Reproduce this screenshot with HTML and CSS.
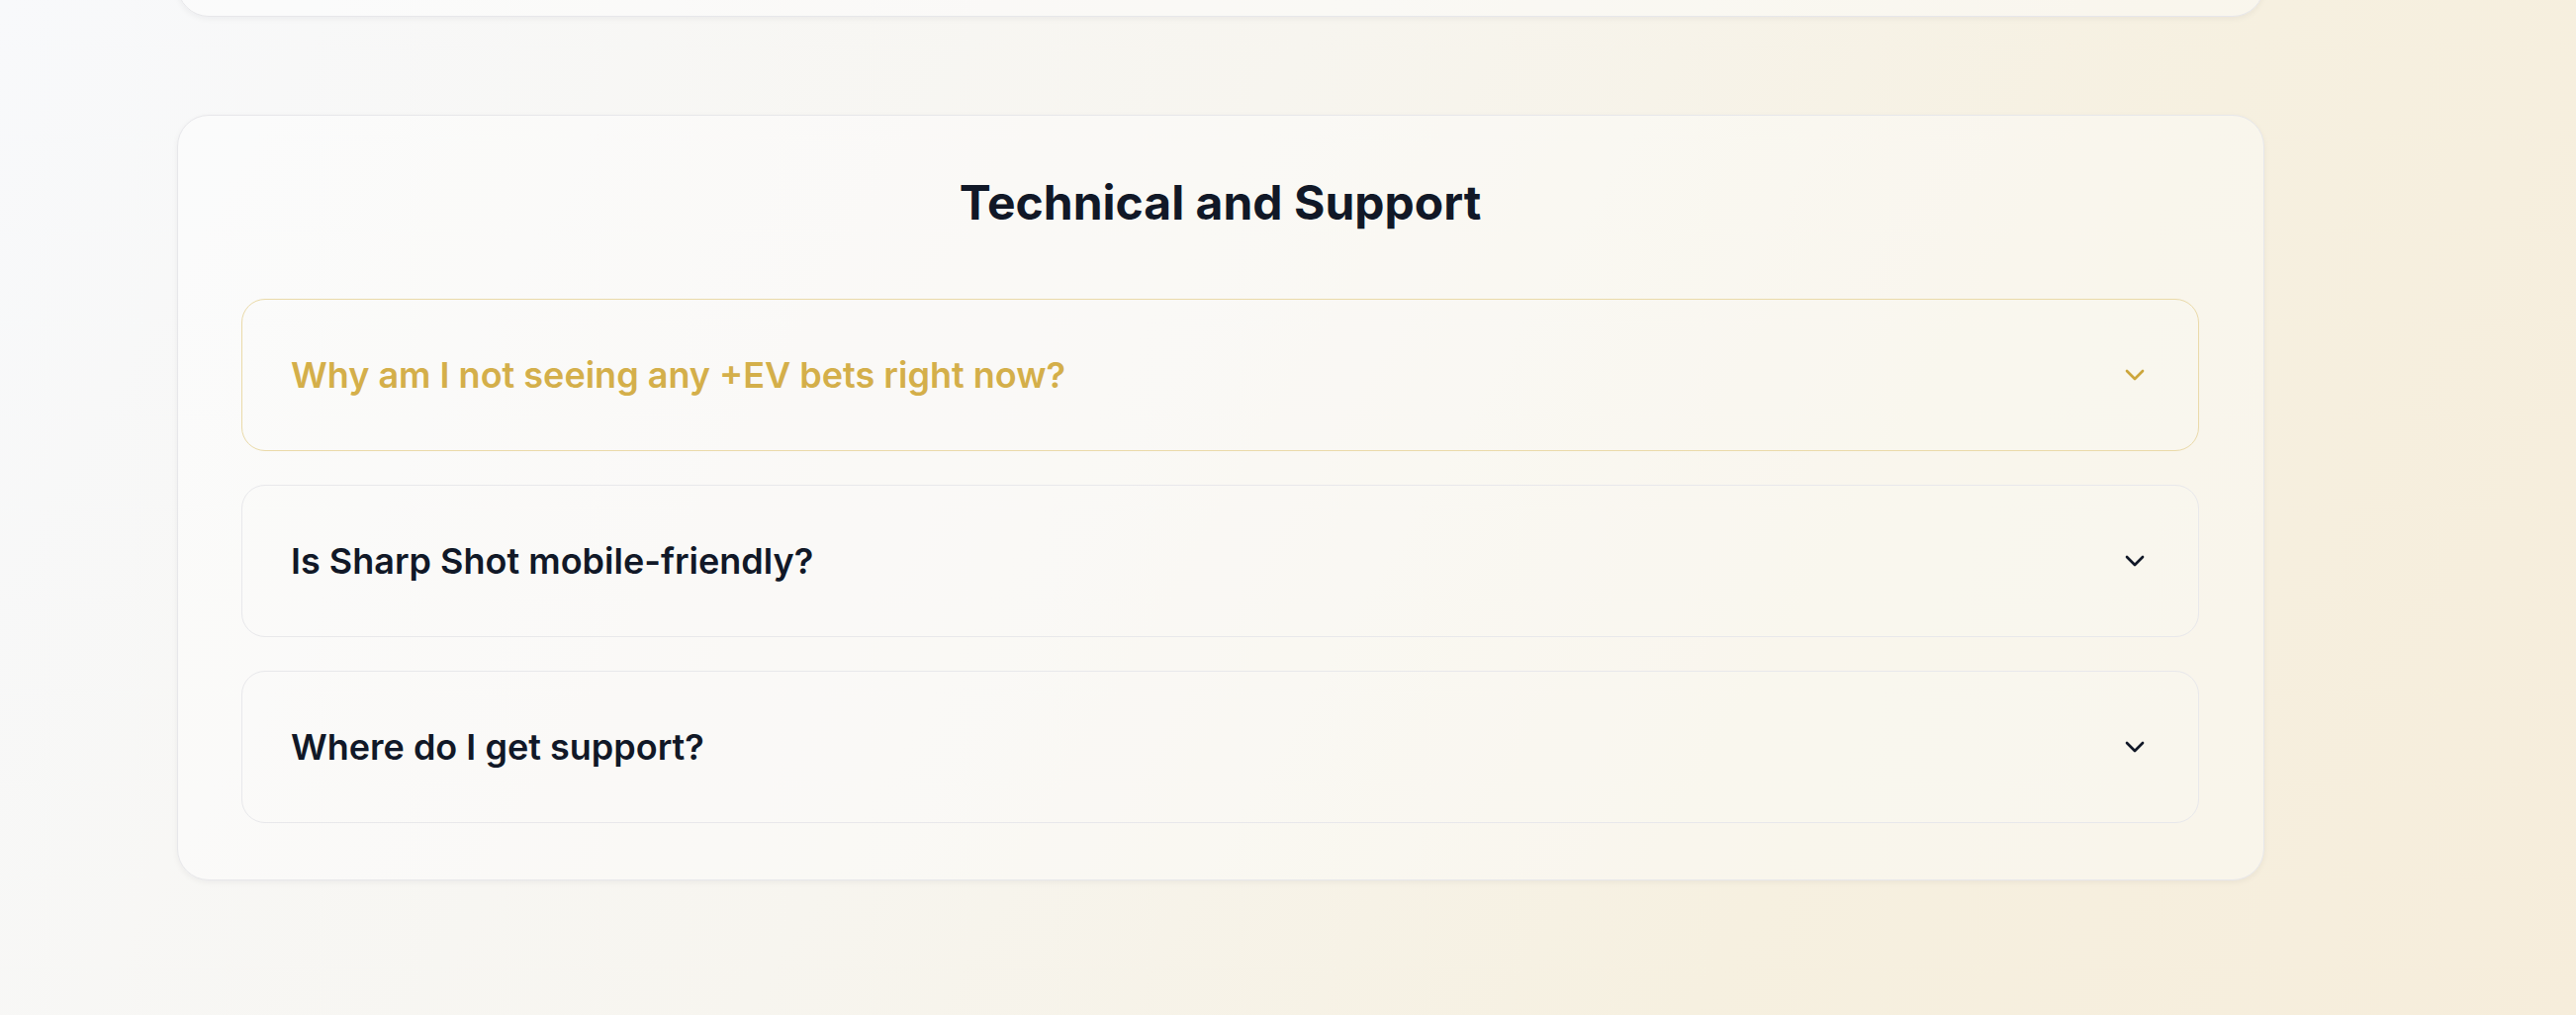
FILE: index.html
```html
<!DOCTYPE html>
<html lang="en">
<head>
<meta charset="utf-8">
<title>FAQ - Technical and Support</title>
<link rel="stylesheet" href="styles.css">
</head>
<body>
<main class="page">
  <div class="container">
    <section class="card card-prev" aria-hidden="true"></section>
    <section class="card faq-card">
      <h2 class="faq-title">Technical and Support</h2>
      <div class="faq-list">
        <div class="faq-item is-active">
          <span class="faq-question">Why am I not seeing any +EV bets right now?</span>
          <svg class="chev" viewBox="0 0 24 24" width="32" height="32" fill="none" stroke="currentColor" stroke-width="2" stroke-linecap="round" stroke-linejoin="round"><path d="m6 9 6 6 6-6"/></svg>
        </div>
        <div class="faq-item">
          <span class="faq-question">Is Sharp Shot mobile-friendly?</span>
          <svg class="chev" viewBox="0 0 24 24" width="32" height="32" fill="none" stroke="currentColor" stroke-width="2" stroke-linecap="round" stroke-linejoin="round"><path d="m6 9 6 6 6-6"/></svg>
        </div>
        <div class="faq-item">
          <span class="faq-question">Where do I get support?</span>
          <svg class="chev" viewBox="0 0 24 24" width="32" height="32" fill="none" stroke="currentColor" stroke-width="2" stroke-linecap="round" stroke-linejoin="round"><path d="m6 9 6 6 6-6"/></svg>
        </div>
      </div>
    </section>
  </div>
</main>
</body>
</html>
```
FILE: styles.css
```css
html, body {
  margin: 0;
  padding: 0;
}
body {
  width: 2604px;
  height: 1026px;
  overflow: hidden;
  font-family: Inter, "Noto Sans", "Liberation Sans", sans-serif;
  background: linear-gradient(120deg, #f8f9fb 0%, #f7f5ef 42%, #f6f0e0 72%, #f6eddb 100%);
  color: #111827;
}
.page {
  display: flex;
}
.container {
  width: 2110px;
  margin-left: 179px;
  display: flex;
  flex-direction: column;
}
.card {
  box-sizing: border-box;
  background: rgba(255, 255, 255, 0.4);
  border: 1px solid #e7e7ea;
  border-radius: 32px;
  box-shadow: 0 2px 6px rgba(17, 24, 39, 0.05);
}
.card-prev {
  height: 120px;
  margin-top: -103px;
}
.faq-card {
  margin-top: 99px;
  padding: 64px 65px 57px 64px;
}
.faq-title {
  margin: 0 0 73px;
  text-align: center;
  font-size: 48px;
  line-height: 48px;
  font-weight: 700;
  color: #111827;
}
.faq-list {
  display: flex;
  flex-direction: column;
  gap: 34px;
}
.faq-item {
  display: flex;
  align-items: center;
  justify-content: space-between;
  padding: 48px 48px 48px 49px;
  border: 1px solid #e8e8eb;
  border-radius: 24px;
  background: rgba(255, 255, 255, 0.1);
  color: #111827;
}
.faq-question {
  font-size: 36px;
  line-height: 56px;
  font-weight: 600;
}
.chev {
  flex: none;
  display: block;
}
.faq-item.is-active {
  border-color: #eadaa9;
  color: #d4af4a;
}
.faq-item.is-active .chev {
  color: #cca63c;
}
```
